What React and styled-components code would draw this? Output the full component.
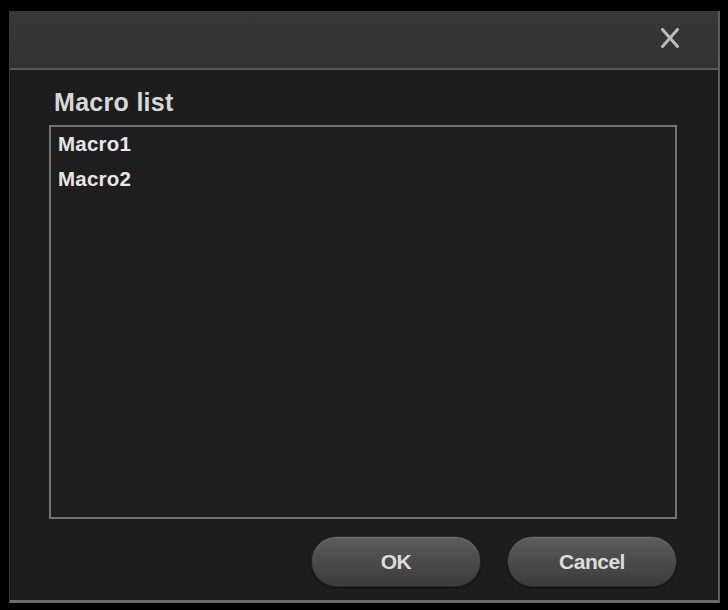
import React from "react";
import styled, { createGlobalStyle } from "styled-components";

const Global = createGlobalStyle`
  html, body { margin: 0; padding: 0; background: #000; }
  body { font-family: "Liberation Sans", Arial, sans-serif; }
  #root { width: 728px; height: 610px; overflow: hidden; }
`;

const Dialog = styled.div`
  box-sizing: border-box;
  width: 711px;
  margin: 11px 0 0 9px;
  display: flex;
  flex-direction: column;
  border-left: 1px solid #3a3a3a;
  border-right: 2px solid #5c5c5c;
  border-bottom: 3px solid #6a6a6a;
  background: #1d1d1d;
`;

const TitleBar = styled.div`
  height: 59px;
  background: linear-gradient(180deg, #383838 0%, #333333 100%);
  border-bottom: 2px solid #595959;
  display: flex;
  justify-content: flex-end;
  align-items: flex-start;
  padding: 17px 38px 0 0;
  box-sizing: border-box;
`;

const CloseButton = styled.button`
  background: none;
  border: none;
  padding: 0;
  width: 20px;
  height: 20px;
  display: flex;
  align-items: center;
  justify-content: center;
  cursor: pointer;
`;

const Body = styled.div`
  display: flex;
  flex-direction: column;
  padding: 18px 41px 13px 39px;
`;

const Label = styled.div`
  font-size: 25px;
  line-height: 28px;
  font-weight: bold;
  color: #d8d8d8;
  margin-left: 5px;
  letter-spacing: 0.3px;
`;

const ListBox = styled.ul`
  list-style: none;
  margin: 9px 0 0 0;
  padding: 0;
  height: 394px;
  box-sizing: border-box;
  border: 2px solid #737373;
  background: #1e1e1e;
`;

const ListItem = styled.li`
  font-size: 20.5px;
  line-height: 35px;
  font-weight: bold;
  color: #e6e6e6;
  padding-left: 7px;
  letter-spacing: 0.2px;
  margin-top: ${(p) => (p.$first ? "-1px" : "0")};
`;

const ButtonRow = styled.div`
  display: flex;
  justify-content: flex-end;
  gap: 26px;
  margin-top: 17px;
`;

const PillButton = styled.button`
  width: 170px;
  height: 51px;
  border-radius: 26px;
  border: 1px solid #2a2a2a;
  background: linear-gradient(180deg, #5e5e5e 0%, #4c4c4c 45%, #3c3c3c 100%);
  box-shadow: inset 0 1px 0 rgba(255, 255, 255, 0.12), 0 1px 2px rgba(0, 0, 0, 0.6);
  color: #dcdcdc;
  font-family: "Liberation Sans", Arial, sans-serif;
  font-size: 21px;
  font-weight: bold;
  letter-spacing: -0.5px;
  cursor: pointer;
`;

export default function App() {
  return (
    <>
      <Global />
      <Dialog>
        <TitleBar>
          <CloseButton aria-label="Close">
            <svg width="20" height="20" viewBox="0 0 20 20">
              <path d="M2.5 1.5 L17.5 18.5 M17.5 1.5 L2.5 18.5" stroke="#bdbdbd" strokeWidth="3" strokeLinecap="round" fill="none" />
            </svg>
          </CloseButton>
        </TitleBar>
        <Body>
          <Label>Macro list</Label>
          <ListBox>
            <ListItem $first>Macro1</ListItem>
            <ListItem>Macro2</ListItem>
          </ListBox>
          <ButtonRow>
            <PillButton>OK</PillButton>
            <PillButton>Cancel</PillButton>
          </ButtonRow>
        </Body>
      </Dialog>
    </>
  );
}
